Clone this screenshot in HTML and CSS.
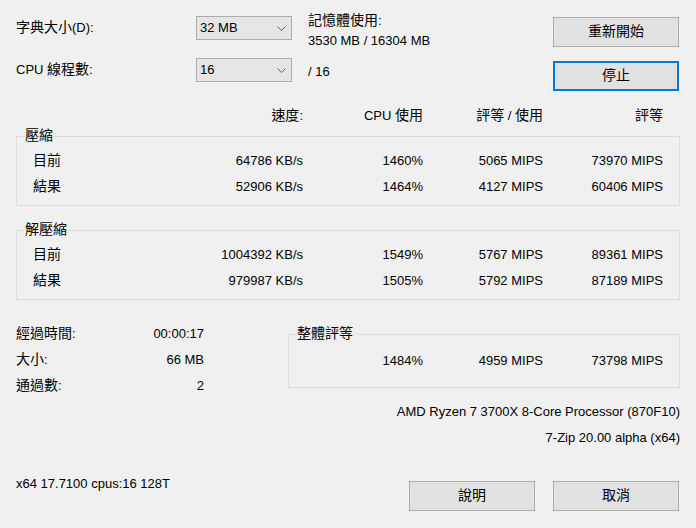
FILE: index.html
```html
<!DOCTYPE html>
<html lang="zh-Hant">
<head>
<meta charset="utf-8">
<title>基準測試</title>
<link rel="stylesheet" href="styles.css">
</head>
<body>
<div class="dialog">
  <div class="top">
    <div class="label"><span class="zh">字典大小</span>(D):</div>
    <div class="combo"><span>32 MB</span><svg class="chev" width="9" height="5" viewBox="0 0 9 5"><path d="M0.5 0.5 L4.5 4.5 L8.5 0.5" fill="none" stroke="#606060" stroke-width="1"/></svg></div>
    <div class="mem"><div><span class="zh">記憶體使用</span>:</div><div>3530 MB / 16304 MB</div></div>
    <button class="btn btn-first"><span class="zh">重新開始</span></button>
    <div class="label">CPU <span class="zh">線程數</span>:</div>
    <div class="combo"><span>16</span><svg class="chev" width="9" height="5" viewBox="0 0 9 5"><path d="M0.5 0.5 L4.5 4.5 L8.5 0.5" fill="none" stroke="#606060" stroke-width="1"/></svg></div>
    <div class="threads">/ 16</div>
    <button class="btn btn-focus"><span class="zh">停止</span></button>
  </div>

  <div class="head cols">
    <span></span><span><span class="zh">速度</span>:</span><span>CPU <span class="zh">使用</span></span><span><span class="zh">評等</span> / <span class="zh">使用</span></span><span><span class="zh">評等</span></span>
  </div>

  <fieldset class="group">
    <legend><span class="zh">壓縮</span></legend>
    <div class="cols row"><span class="name"><span class="zh">目前</span></span><span>64786 KB/s</span><span>1460%</span><span>5065 MIPS</span><span>73970 MIPS</span></div>
    <div class="cols row"><span class="name"><span class="zh">結果</span></span><span>52906 KB/s</span><span>1464%</span><span>4127 MIPS</span><span>60406 MIPS</span></div>
  </fieldset>

  <fieldset class="group group-next">
    <legend><span class="zh">解壓縮</span></legend>
    <div class="cols row"><span class="name"><span class="zh">目前</span></span><span>1004392 KB/s</span><span>1549%</span><span>5767 MIPS</span><span>89361 MIPS</span></div>
    <div class="cols row"><span class="name"><span class="zh">結果</span></span><span>979987 KB/s</span><span>1505%</span><span>5792 MIPS</span><span>87189 MIPS</span></div>
  </fieldset>

  <div class="stats">
    <div class="info">
      <div class="info-row"><span><span class="zh">經過時間</span>:</span><span>00:00:17</span></div>
      <div class="info-row"><span><span class="zh">大小</span>:</span><span>66 MB</span></div>
      <div class="info-row"><span><span class="zh">通過數</span>:</span><span>2</span></div>
    </div>
    <fieldset class="group total">
      <legend><span class="zh">整體評等</span></legend>
      <div class="cols3 row"><span></span><span>1484%</span><span>4959 MIPS</span><span>73798 MIPS</span></div>
    </fieldset>
  </div>

  <div class="sysline">AMD Ryzen 7 3700X 8-Core Processor (870F10)</div>
  <div class="sysline">7-Zip 20.00 alpha (x64)</div>

  <div class="bottom">
    <span class="build">x64 17.7100 cpus:16 128T</span>
    <div class="btns">
      <button class="btn"><span class="zh">說明</span></button>
      <button class="btn"><span class="zh">取消</span></button>
    </div>
  </div>
</div>
</body>
</html>
```

FILE: styles.css
```css
html, body {
  margin: 0;
  padding: 0;
  background: #f0f0f0;
}
body {
  font-family: "Liberation Sans", "Noto Sans CJK TC", sans-serif;
  font-size: 13px;
  color: #000;
  width: 696px;
  height: 528px;
  overflow: hidden;
}
.zh {
  font-family: "Noto Sans CJK TC", sans-serif;
  font-size: 14px;
  line-height: 0;
}
.dialog {
  display: flex;
  flex-direction: column;
}

/* top controls */
.top {
  display: grid;
  grid-template-columns: 180px 96px 1fr 126px;
  grid-template-rows: 24px 24px;
  row-gap: 18px;
  padding: 16px 17px 0 16px;
}
.label {
  line-height: 24px;
}
.combo {
  box-sizing: border-box;
  height: 24px;
  border: 1px solid #adadad;
  background: #e5e5e5;
  display: flex;
  align-items: center;
  justify-content: space-between;
  padding: 0 5px 0 3px;
  line-height: 22px;
}
.chev {
  display: block;
}
.mem {
  align-self: start;
  margin-top: -5px;
  padding-left: 16px;
  line-height: 19.5px;
  white-space: nowrap;
}
.threads {
  padding-left: 16px;
  line-height: 24px;
  margin-top: 2px;
}
.btn {
  box-sizing: border-box;
  width: 126px;
  height: 30px;
  border: 1px solid #adadad;
  background: #e1e1e1;
  font-family: inherit;
  font-size: 13px;
  line-height: 20px;
  color: #000;
  padding: 0;
  margin: 0;
}
.btn-first {
  margin-top: 1px;
}
.btn-focus {
  margin-top: 3px;
  border: 2px solid #0078d7;
}

/* table columns */
.cols {
  display: grid;
  grid-template-columns: 1fr repeat(4, 120px);
  text-align: right;
  white-space: nowrap;
}
.cols3 {
  display: grid;
  grid-template-columns: 1fr repeat(3, 120px);
  text-align: right;
  white-space: nowrap;
}
.cols .name {
  text-align: left;
  padding-left: 16px;
}
.head {
  margin: 24px 33px 0 17px;
  line-height: 20px;
}
.row {
  line-height: 26px;
}

/* group boxes */
.group {
  margin: 2px 16px 0 16px;
  padding: 4px 16px 5px 0;
  border: 1px solid #dcdcdc;
  min-width: 0;
}
.group legend {
  margin-left: 7px;
  padding: 0 1px;
  line-height: 16px;
}
.group-next {
  margin-top: 16px;
}

/* stats */
.stats {
  display: flex;
  margin-top: 21px;
  padding: 0 16px;
}
.info {
  width: 188px;
  flex: none;
}
.info-row {
  display: flex;
  justify-content: space-between;
  line-height: 26px;
}
.group.total {
  flex: 1;
  margin: 5px 0 0 84px;
  padding: 6px 16px 13px 0;
  align-self: flex-start;
}
.group.total legend {
  margin-left: 7px;
}

.sysline {
  text-align: right;
  padding-right: 16px;
  line-height: 26px;
}

/* bottom */
.bottom {
  display: flex;
  justify-content: space-between;
  align-items: flex-start;
  margin-top: 23px;
  padding: 0 17px 0 16px;
}
.build {
  line-height: 20px;
}
.btns {
  display: flex;
  gap: 18px;
  margin-top: 7px;
}
```
